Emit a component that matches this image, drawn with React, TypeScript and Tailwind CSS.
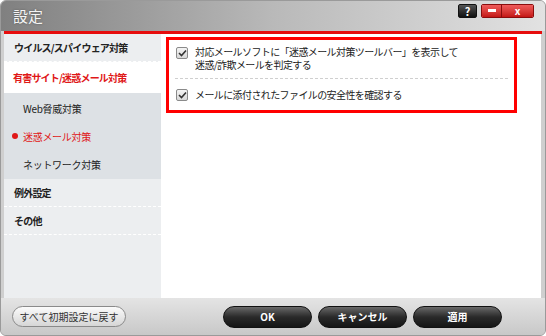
import React from "react";

const jp = { fontFamily: '"Noto Sans CJK JP", "Noto Sans", sans-serif' };

const navTop = "h-[28px] flex items-center px-[10px] text-[10px] font-bold tracking-[-0.8px] border-b border-dashed border-white";

const subItems = [
  { label: "Web脅威対策", active: false },
  { label: "迷惑メール対策", active: true },
  { label: "ネットワーク対策", active: false },
];

function Check() {
  return (
    <span className="w-[12px] h-[12px] shrink-0 rounded-[2px] border border-[#8a8a8a] bg-gradient-to-b from-[#f4f4f4] to-[#d8d8d8] flex items-center justify-center">
      <svg width="9" height="8" viewBox="0 0 9 8">
        <path d="M1 4 L3.5 6.5 L8 1.5" fill="none" stroke="#333" strokeWidth="1.6" />
      </svg>
    </span>
  );
}

const App = () => {
  return (
    <div className="w-[546px] h-[336px] bg-white" style={jp}>
      <div className="w-full h-full rounded-[6px] border border-[#9a9a9a] bg-[#cfcfcf] flex flex-col overflow-hidden">
        {/* title bar */}
        <div className="h-[30px] shrink-0 flex items-center justify-between pl-[12px] pr-[11px] bg-gradient-to-r from-[#808080] via-[#b9b9b9] to-[#e2e2e2]">
          <span className="text-[15px] text-[#f4f4f4] [text-shadow:0_0_2px_#555]">設定</span>
          <div className="flex items-center gap-[4px] -mt-[11px]">
            <div className="w-[19px] h-[14px] rounded-[2px] border border-[#111] bg-gradient-to-b from-[#555] to-[#111] text-white text-[11px] font-bold leading-[12px] text-center">?</div>
            <div className="flex h-[14px] rounded-[2px] border border-[#8a0d0d] overflow-hidden">
              <div className="w-[20px] bg-gradient-to-b from-[#f05a5a] to-[#c41414] flex items-center justify-center border-r border-[#8a0d0d]">
                <span className="w-[8px] h-[3px] bg-white" />
              </div>
              <div className="w-[31px] bg-gradient-to-b from-[#f05a5a] to-[#c41414] text-white text-[10px] font-bold leading-[12px] text-center">x</div>
            </div>
          </div>
        </div>
        <div className="h-[3px] mx-[3px] shrink-0 bg-[#e60d0d]" />
        {/* body */}
        <div className="flex-1 flex mx-[3px] mr-[4px]">
          <div className="w-[157px] bg-[#eceef0] flex flex-col">
            <div className={navTop + " h-[27px] text-[#222]"}>ウイルス/スパイウェア対策</div>
            <div className="h-[31px] flex items-center px-[9px] text-[10px] font-bold tracking-[-0.8px] bg-white text-[#e01818]">有害サイト/迷惑メール対策</div>
            <div className="bg-[#dde1e5] py-[1px] flex flex-col">
              {subItems.map((s) => (
                <div key={s.label} className={"h-[28px] flex items-center text-[10px] tracking-[-0.3px] " + (s.active ? "pl-[8px] text-[#e01818]" : "pl-[19px] text-[#222]")}>
                  {s.active && <span className="w-[6px] h-[6px] rounded-full bg-[#e01818] mr-[5px]" />}
                  {s.label}
                </div>
              ))}
            </div>
            <div className={navTop + " text-[#222]"}>例外設定</div>
            <div className={navTop + " text-[#222]"}>その他</div>
          </div>
          <div className="flex-1 bg-white pl-[5px] pr-[24px] pt-[3px]">
            <div className="border-[3px] border-[#ff0000] h-[76px] px-[6px] flex flex-col text-[10px] leading-[13px] tracking-[-0.6px] text-[#222]">
              <div className="h-[39px] flex items-start gap-[7px] pt-[7px] px-[1px] border-b border-dashed border-[#cfcfcf]">
                <Check />
                <div className="-mt-[2px]">
                  <div>対応メールソフトに「迷惑メール対策ツールバー」を表示して</div>
                  <div>迷惑/詐欺メールを判定する</div>
                </div>
              </div>
              <div className="flex-1 flex items-center gap-[7px] px-[1px]">
                <Check />
                <div>メールに添付されたファイルの安全性を確認する</div>
              </div>
            </div>
          </div>
        </div>
        {/* footer */}
        <div className="h-[37px] shrink-0 flex items-center justify-between pl-[11px] pr-[43px] bg-gradient-to-b from-[#e4e4e4] to-[#c8c8c8]">
          <button className="w-[114px] h-[21px] rounded-full border border-[#8a8a8a] bg-gradient-to-b from-[#fbfbfb] to-[#d6d6d6] text-[10px] text-[#333]">
            すべて初期設定に戻す
          </button>
          <div className="flex gap-[6px]">
            {["OK", "キャンセル", "適用"].map((b) => (
              <button key={b} className="w-[89px] h-[22px] rounded-full border border-[#111] bg-gradient-to-b from-[#6a6a6a] via-[#2a2a2a] to-[#151515] text-[10px] font-bold text-white">
                {b}
              </button>
            ))}
          </div>
        </div>
      </div>
    </div>
  );
};

export default App;
